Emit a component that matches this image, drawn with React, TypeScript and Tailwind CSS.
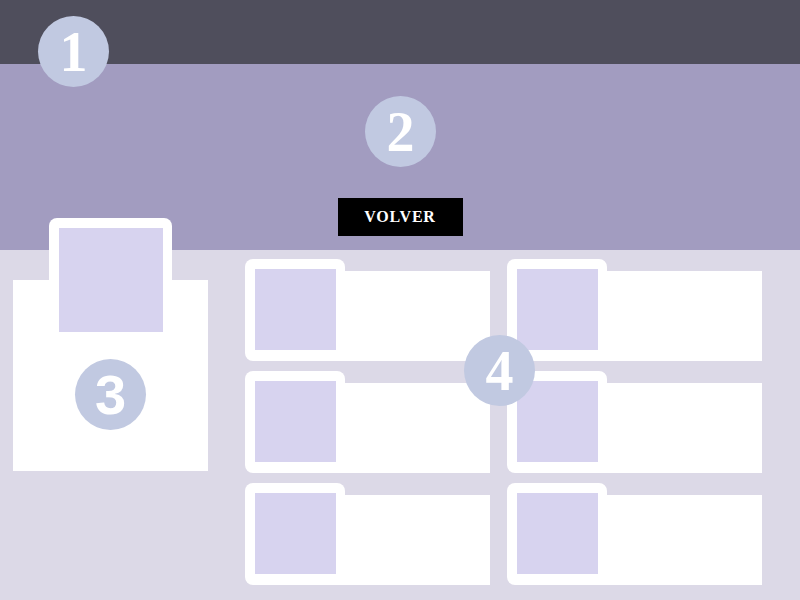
import React from "react";

function Badge({ n, className, sans }: { n: string; className: string; sans?: boolean }) {
  return (
    <div
      className={
        "absolute z-20 flex h-[71px] w-[71px] items-center justify-center rounded-full bg-[#c1c9e1] text-[56px] leading-none font-bold text-white " +
        className
      }
      style={{ fontFamily: sans ? '"Liberation Sans", Arial, sans-serif' : '"Liberation Serif", "DejaVu Serif", serif' }}
    >
      {n}
    </div>
  );
}

function Item() {
  return (
    <div className="flex h-[102px]">
      <div className="relative z-10 h-full w-[100px] shrink-0 rounded-lg bg-white pl-[10px] pt-[10px]">
        <div className="h-[81px] w-[81px] bg-[#d7d3ef]" />
      </div>
      <div className="-ml-[8px] mt-[12px] flex-1 bg-white" />
    </div>
  );
}

export default function App() {
  return (
    <div
      className="relative h-[600px] w-[800px] overflow-hidden bg-[#dcd9e7]"
      style={{ fontFamily: '"Liberation Serif", serif' }}
    >
      <header className="h-16 bg-[#4f4e5c]" />
      <section className="flex h-[186px] flex-col items-center bg-[#a29cc0] pt-[134px]">
        <button className="flex h-[38px] w-[125px] items-center justify-center bg-black text-[16px] font-bold tracking-[0.8px] text-white">
          VOLVER
        </button>
      </section>
      <main className="-mt-[32px] flex gap-[37px] pl-[13px]">
        <div className="flex w-[195px] flex-col">
          <div className="h-[62px] w-[123px] self-center rounded-t-lg bg-white" />
          <div className="flex h-[191px] flex-col items-center bg-white">
            <div className="-mt-[52px] h-[104px] w-[104px] bg-[#d7d3ef]" />
          </div>
        </div>
        <div className="mt-[41px] grid grid-cols-[245px_255px] gap-x-[17px] gap-y-[10px]">
          <Item />
          <Item />
          <Item />
          <Item />
          <Item />
          <Item />
        </div>
      </main>
      <Badge n="1" className="left-[38px] top-[16px]" />
      <Badge n="2" className="left-[365px] top-[96px]" />
      <Badge n="3" className="left-[75px] top-[359px]" sans />
      <Badge n="4" className="left-[464px] top-[335px]" />
    </div>
  );
}
